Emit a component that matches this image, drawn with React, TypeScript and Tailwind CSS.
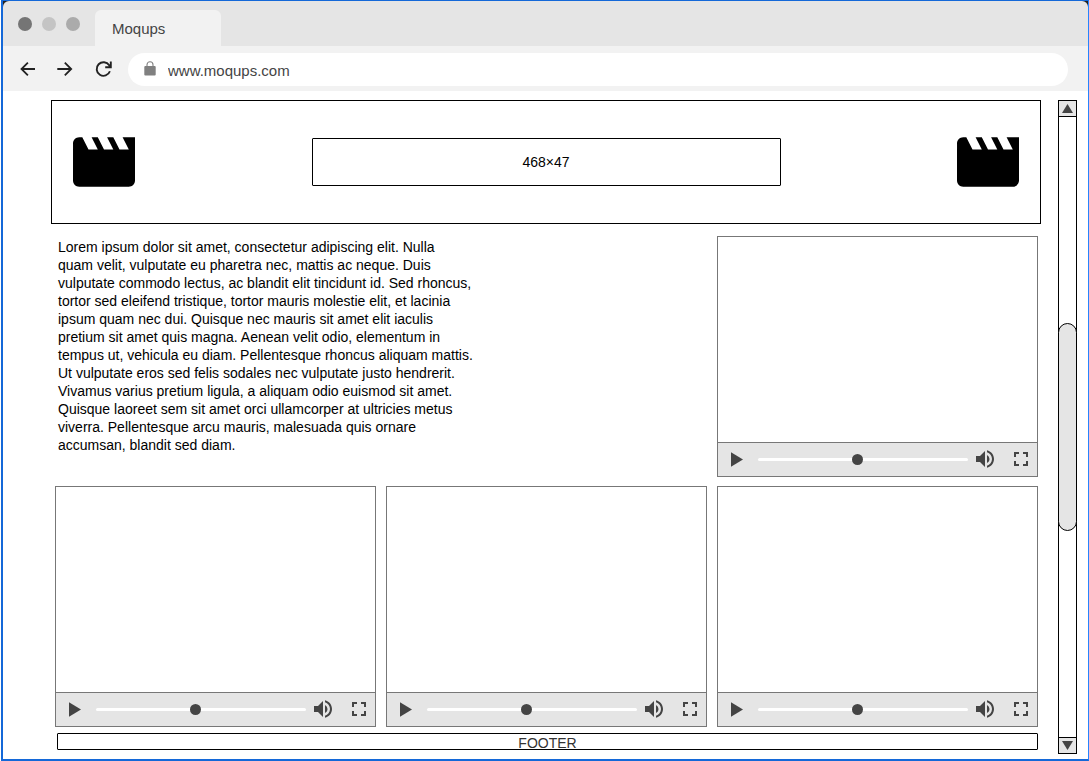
import React from "react";
import { MdFullscreen, MdVolumeUp } from "react-icons/md";

function MovieIcon() {
  return (
    <svg viewBox="2 4 20 16" className="h-[50px] w-[62px]" fill="black" aria-hidden="true">
      <path d="M18 4l2 4h-3l-2-4h-2l2 4h-3l-2-4H8l2 4H7L5 4H4c-1.1 0-1.99.9-1.99 2L2 18c0 1.1.9 2 2 2h16c1.1 0 2-.9 2-2V4h-4z" />
    </svg>
  );
}

function TitleBar() {
  return (
    <div className="flex h-[45px] items-end rounded-t-md bg-[#e5e5e5] pl-[15px]">
      <div className="flex gap-2.5 pb-[15px]">
        <span className="size-3.5 rounded-full bg-[#757575]" />
        <span className="size-3.5 rounded-full bg-[#c4c4c4]" />
        <span className="size-3.5 rounded-full bg-[#ababab]" />
      </div>
      <div className="ml-[15px] h-9 w-[126px] rounded-t-md bg-[#f2f2f2] pl-[17px] text-[15px] leading-[38px] text-[#444]">
        Moqups
      </div>
    </div>
  );
}

function Toolbar() {
  return (
    <div className="flex h-[45px] items-center bg-[#f2f2f2] pt-px pr-5 pl-[17px]">
      <div className="flex items-center gap-[21px] text-[#222]">
        <button type="button" aria-label="Back">
          <svg viewBox="0 0 16 16" className="size-4" fill="none" stroke="currentColor" strokeWidth="1.8">
            <path d="M15 8H1.8M7.9 1.6 1.5 8l6.4 6.4" />
          </svg>
        </button>
        <button type="button" aria-label="Forward">
          <svg viewBox="0 0 16 16" className="size-4" fill="none" stroke="currentColor" strokeWidth="1.8">
            <path d="M.3 8h13.6M7.8 1.6 14.2 8l-6.4 6.4" />
          </svg>
        </button>
        <button type="button" aria-label="Reload">
          <svg viewBox="0 0 18 18" className="size-[18px]" fill="none" stroke="currentColor" strokeWidth="1.9">
            <path d="M15.9 11.3A6.8 6.8 0 1 1 15.2 5.3L16.2 6.8M16.8 1.6v5.6h-5.6" />
          </svg>
        </button>
      </div>
      <label className="ml-4 flex h-[33px] flex-1 items-center rounded-full bg-white pl-4">
        <svg viewBox="0 0 12 15" className="mb-px h-[15px] w-3" aria-hidden="true">
          <path d="M3 6V3.8a3 3 0 0 1 6 0V6" fill="none" stroke="#808080" strokeWidth="1.1" />
          <rect x="0.3" y="5" width="11.4" height="9.6" rx="1" fill="#808080" />
        </svg>
        <input
          type="text"
          aria-label="Address"
          defaultValue="www.moqups.com"
          className="ml-3 h-full min-w-0 flex-1 bg-transparent pt-0.5 text-[15px] text-[#444] outline-none"
        />
      </label>
    </div>
  );
}

function VideoPlayer() {
  return (
    <div className="border border-[#777]">
      <div className="aspect-[319/205]" />
      <div className="flex h-[34px] items-center border-t border-[#777] bg-[#e5e5e5] pr-1 pl-[13px] text-[#444]">
        <button type="button" aria-label="Play">
          <svg viewBox="0 0 12 15" className="h-[15px] w-3" fill="currentColor">
            <path d="M0 .3v14.4l12-7.2z" />
          </svg>
        </button>
        <input
          type="range"
          aria-label="Seek"
          defaultValue={47}
          className="mr-[5px] ml-[15px] h-[3px] min-w-0 flex-1 appearance-none rounded-full bg-white [&::-webkit-slider-thumb]:size-[11px] [&::-webkit-slider-thumb]:appearance-none [&::-webkit-slider-thumb]:rounded-full [&::-webkit-slider-thumb]:bg-[#444]"
        />
        <button type="button" aria-label="Volume" className="mb-px">
          <MdVolumeUp size={24} />
        </button>
        <button type="button" aria-label="Full screen" className="mb-px ml-3">
          <MdFullscreen size={24} />
        </button>
      </div>
    </div>
  );
}

function ScrollBar() {
  return (
    <div className="flex w-[19px] flex-col border border-black">
      <button
        type="button"
        aria-label="Scroll up"
        className="flex h-4 items-center justify-center border-b border-black bg-[#e5e5e5]"
      >
        <svg viewBox="0 0 11 9" className="h-[9px] w-[11px]" fill="#444">
          <path d="M5.5 0 11 9H0z" />
        </svg>
      </button>
      <div className="-mx-px flex flex-1 flex-col">
        <div className="flex-1" />
        <div className="flex-1 rounded-full border border-black bg-[#e5e5e5]" />
        <div className="flex-1" />
      </div>
      <button
        type="button"
        aria-label="Scroll down"
        className="flex h-4 items-center justify-center border-t border-black bg-[#e5e5e5]"
      >
        <svg viewBox="0 0 11 9" className="h-[9px] w-[11px]" fill="#444">
          <path d="M5.5 9 0 0h11z" />
        </svg>
      </button>
    </div>
  );
}

export default function App() {
  return (
    <div className="min-h-screen bg-white pl-px font-['Liberation_Sans',Arial,sans-serif] text-sm text-black">
      <div className="border-t border-r border-b-2 border-l-2 border-[#1468d8] border-r-[#2684ff] bg-[#222]">
        <TitleBar />
        <Toolbar />
        <div className="flex gap-[17px] bg-white pt-[9px] pr-[11px] pb-[5px] pl-12">
          <div className="flex-1 pb-1">
            <header className="flex h-[124px] items-center justify-between border border-black px-[21px]">
              <MovieIcon />
              <div className="flex h-12 w-[469px] items-center justify-center rounded-[1px] border border-black">
                468×47
              </div>
              <MovieIcon />
            </header>
            <main className="mt-3 mr-[3px] ml-1 grid grid-cols-3 gap-x-2.5 gap-y-[9px]">
              <p className="col-span-2 pt-0.5 pl-[3px] leading-[18px]">
                Lorem ipsum dolor sit amet, consectetur adipiscing elit. Nulla
                <br />
                quam velit, vulputate eu pharetra nec, mattis ac neque. Duis
                <br />
                vulputate commodo lectus, ac blandit elit tincidunt id. Sed rhoncus,
                <br />
                tortor sed eleifend tristique, tortor mauris molestie elit, et lacinia
                <br />
                ipsum quam nec dui. Quisque nec mauris sit amet elit iaculis
                <br />
                pretium sit amet quis magna. Aenean velit odio, elementum in
                <br />
                tempus ut, vehicula eu diam. Pellentesque rhoncus aliquam mattis.
                <br />
                Ut vulputate eros sed felis sodales nec vulputate justo hendrerit.
                <br />
                Vivamus varius pretium ligula, a aliquam odio euismod sit amet.
                <br />
                Quisque laoreet sem sit amet orci ullamcorper at ultricies metus
                <br />
                viverra. Pellentesque arcu mauris, malesuada quis ornare
                <br />
                accumsan, blandit sed diam.
              </p>
              <VideoPlayer />
              <VideoPlayer />
              <VideoPlayer />
              <VideoPlayer />
            </main>
            <footer className="mt-1.5 mr-[3px] ml-1.5 h-[17px] rounded-[1px] border border-black text-center leading-[18px] text-[#333]">
              FOOTER
            </footer>
          </div>
          <ScrollBar />
        </div>
      </div>
    </div>
  );
}
